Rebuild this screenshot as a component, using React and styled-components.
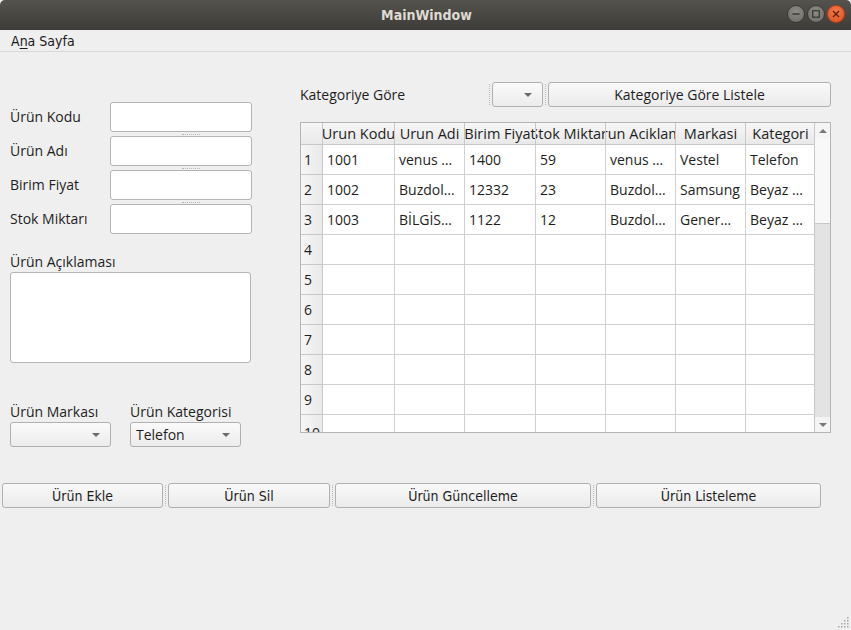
import styled, { createGlobalStyle } from "styled-components";

const Global = createGlobalStyle`
  html, body { margin: 0; padding: 0; background: #efefef; }
  body { font-family: "Open Sans", "DejaVu Sans", sans-serif; font-size: 14px; color: #1e1e1e; }
`;

const Window = styled.div`
  width: 851px;
  height: 630px;
  display: flex;
  flex-direction: column;
  background: #efefef;
  position: relative;
  overflow: hidden;
`;

const TitleBar = styled.div`
  height: 30px;
  flex: none;
  background: linear-gradient(#55534e, #3d3c38);
  display: flex;
  align-items: center;
  justify-content: center;
  position: relative;
  border-radius: 5px 5px 0 0;
`;

const Title = styled.span`
  font-family: "DejaVu Sans Condensed", "DejaVu Sans", sans-serif;
  font-stretch: condensed;
  font-weight: bold;
  font-size: 14px;
  color: #dfdbd2;
  margin-left: 2px;
`;

const WinButtons = styled.div`
  position: absolute;
  right: 6px;
  top: 5px;
  display: flex;
  gap: 2px;
`;

const WinBtn = styled.div`
  width: 18px;
  height: 18px;
  border-radius: 50%;
  background: ${(p) =>
    p.$close
      ? "radial-gradient(circle at 50% 35%, #f47a4b, #e0501c)"
      : "radial-gradient(circle at 50% 35%, #8e8c87, #6b6964)"};
  border: 1px solid ${(p) => (p.$close ? "#b7431a" : "#3a3935")};
  box-sizing: border-box;
  display: flex;
  align-items: center;
  justify-content: center;
`;

const MenuBar = styled.div`
  height: 21px;
  flex: none;
  border-bottom: 1px solid #d8d8d8;
  display: flex;
  align-items: center;
  padding-left: 11px;
  font-family: "DejaVu Sans Condensed", "DejaVu Sans", sans-serif;
  font-stretch: condensed;
  font-size: 14px;
  color: #1a1a1a;
  u { text-decoration-thickness: 1px; text-underline-offset: 2px; }
`;

const Body = styled.div`
  display: flex;
  padding-top: 30px;
  height: 381px;
  flex: none;
`;

const LeftCol = styled.div`
  width: 290px;
  flex: none;
  padding-left: 10px;
  padding-top: 20px;
  box-sizing: border-box;
  display: flex;
  flex-direction: column;
`;

const FormRows = styled.div`
  display: flex;
  flex-direction: column;
  gap: 4px;
`;

const FormRow = styled.div`
  display: flex;
  align-items: center;
  height: 30px;
  position: relative;
`;

const Label = styled.div`
  width: 100px;
  flex: none;
  white-space: nowrap;
  margin-top: -1px;
`;

const Input = styled.div`
  width: 142px;
  height: 30px;
  box-sizing: border-box;
  background: #fff;
  border: 1px solid #b4b4b4;
  border-radius: 3px;
`;

const HHandle = styled.div`
  position: absolute;
  left: 172px;
  bottom: -3px;
  width: 18px;
  border-top: 1px dotted #b8b8b8;
`;

const BlockLabel = styled.div`
  margin-top: 18px;
  height: 20px;
  line-height: 20px;
`;

const TextArea = styled.div`
  width: 241px;
  height: 91px;
  box-sizing: border-box;
  background: #fff;
  border: 1px solid #b4b4b4;
  border-radius: 3px;
`;

const ComboRow = styled.div`
  display: flex;
  gap: 19px;
  margin-top: 39px;
`;

const ComboField = styled.div`
  display: flex;
  flex-direction: column;
`;

const ComboLabel = styled.div`
  height: 20px;
  line-height: 20px;
`;

const Combo = styled.div`
  width: ${(p) => p.$w}px;
  height: 25px;
  box-sizing: border-box;
  border: 1px solid #b0b0b0;
  border-radius: 3px;
  background: linear-gradient(#fafafa, #ececec);
  display: flex;
  align-items: center;
  padding-left: 5px;
  padding-right: 10px;
  justify-content: space-between;
  flex: none;
`;

const Arrow = styled.span`
  width: 0;
  height: 0;
  border-left: 4px solid transparent;
  border-right: 4px solid transparent;
  border-top: 4px solid #6a6a6a;
  margin-left: auto;
`;

const RightCol = styled.div`
  width: 531px;
  flex: none;
  margin-left: 10px;
  display: flex;
  flex-direction: column;
`;

const TopRow = styled.div`
  display: flex;
  align-items: center;
  height: 25px;
`;

const TopLabel = styled.div`
  width: 187px;
  flex: none;
`;

const VHandle = styled.div`
  width: 0;
  height: 21px;
  border-left: 1px dotted #b8b8b8;
  margin: 0 2px;
  flex: none;
`;

const Button = styled.div`
  width: ${(p) => p.$w}px;
  height: 25px;
  box-sizing: border-box;
  border: 1px solid #b0b0b0;
  border-radius: 3px;
  background: linear-gradient(#f9f9f9, #ebebeb);
  display: flex;
  align-items: center;
  justify-content: center;
  flex: none;
  font-family: ${(p) =>
    p.$narrow ? `"DejaVu Sans Condensed", "DejaVu Sans", sans-serif` : "inherit"};
  font-stretch: ${(p) => (p.$narrow ? "condensed" : "normal")};
  white-space: nowrap;
`;

const Table = styled.div`
  margin-top: 15px;
  width: 531px;
  height: 311px;
  box-sizing: border-box;
  border: 1px solid #b4b4b4;
  display: flex;
  background: #fff;
`;

const TableView = styled.div`
  flex: 1;
  overflow: hidden;
  display: grid;
  grid-template-columns: 22px 72px 70px 71px 70px 70px 70px 70px;
  grid-auto-rows: 30px;
  grid-template-rows: 22px;
  align-content: start;
`;

const HeadCell = styled.div`
  background: linear-gradient(#f6f6f6, #e9e9e9);
  border-right: 1px solid #c8c8c8;
  border-bottom: 1px solid #c8c8c8;
  display: flex;
  justify-content: center;
  align-items: center;
  overflow: hidden;
  white-space: nowrap;
  box-sizing: border-box;
  font-size: 14.5px;
`;

const RowHead = styled.div`
  background: linear-gradient(90deg, #f6f6f6, #e9e9e9);
  border-right: 1px solid #c8c8c8;
  border-bottom: 1px solid #c8c8c8;
  display: flex;
  align-items: center;
  padding-left: 3px;
  box-sizing: border-box;
  overflow: hidden;
  padding-top: ${(p) => (p.$cut ? "6px" : "0")};
`;

const Cell = styled.div`
  border-right: 1px solid #d0d0d0;
  border-bottom: 1px solid #d0d0d0;
  display: flex;
  align-items: center;
  padding-left: 4px;
  box-sizing: border-box;
  overflow: hidden;
  white-space: nowrap;
`;

const ScrollBar = styled.div`
  width: 15px;
  flex: none;
  border-left: 1px solid #c8c8c8;
  display: flex;
  flex-direction: column;
  background: #e3e3e3;
`;

const ScrollArrow = styled.div`
  height: 15px;
  flex: none;
  background: #f4f4f4;
  display: flex;
  align-items: center;
  justify-content: center;
  span {
    width: 0;
    height: 0;
    border-left: 4px solid transparent;
    border-right: 4px solid transparent;
    ${(p) => (p.$up ? "border-bottom" : "border-top")}: 4px solid #777;
  }
`;

const Thumb = styled.div`
  height: 85px;
  flex: none;
  background: #f8f8f8;
  border-bottom: 1px solid #c8c8c8;
`;

const Track = styled.div`
  flex: 1;
`;

const ButtonRow = styled.div`
  display: flex;
  align-items: center;
  padding-left: 2px;
  margin-top: 20px;
`;

const Grip = styled.svg`
  position: absolute;
  right: 2px;
  bottom: 2px;
`;

const columns = [
  "Urun Kodu",
  "Urun Adi",
  "Birim Fiyat",
  "Stok Miktarı",
  "Urun Aciklama",
  "Markasi",
  "Kategori",
];

const rows = [
  ["1001", "venus …", "1400", "59", "venus …", "Vestel", "Telefon"],
  ["1002", "Buzdol…", "12332", "23", "Buzdol…", "Samsung", "Beyaz …"],
  ["1003", "BİLGİS…", "1122", "12", "Buzdol…", "Gener…", "Beyaz …"],
];

const fields = ["Ürün Kodu", "Ürün Adı", "Birim Fiyat", "Stok Miktarı"];

export default function App() {
  const allRows = [];
  for (let i = 0; i < 10; i++) {
    allRows.push(rows[i] || ["", "", "", "", "", "", ""]);
  }

  return (
    <>
      <Global />
      <Window>
        <TitleBar>
          <Title>MainWindow</Title>
          <WinButtons>
            <WinBtn>
              <svg width="8" height="8" viewBox="0 0 8 8">
                <line x1="0.5" y1="4" x2="7.5" y2="4" stroke="#3b3a36" strokeWidth="1.5" />
              </svg>
            </WinBtn>
            <WinBtn>
              <svg width="8" height="8" viewBox="0 0 8 8">
                <rect x="0.75" y="0.75" width="6.5" height="6.5" fill="none" stroke="#3b3a36" strokeWidth="1.3" />
              </svg>
            </WinBtn>
            <WinBtn $close>
              <svg width="8" height="8" viewBox="0 0 8 8">
                <path d="M1 1L7 7M7 1L1 7" stroke="#5a200a" strokeWidth="1.4" />
              </svg>
            </WinBtn>
          </WinButtons>
        </TitleBar>
        <MenuBar>
          A<u>n</u>a Sayfa
        </MenuBar>

        <Body>
          <LeftCol>
            <FormRows>
              {fields.map((f, i) => (
                <FormRow key={f}>
                  <Label>{f}</Label>
                  <Input />
                  {i < fields.length - 1 && <HHandle />}
                </FormRow>
              ))}
            </FormRows>
            <BlockLabel>Ürün Açıklaması</BlockLabel>
            <TextArea />
            <ComboRow>
              <ComboField>
                <ComboLabel>Ürün Markası</ComboLabel>
                <Combo $w={101}>
                  <Arrow />
                </Combo>
              </ComboField>
              <ComboField>
                <ComboLabel>Ürün Kategorisi</ComboLabel>
                <Combo $w={111}>
                  Telefon
                  <Arrow />
                </Combo>
              </ComboField>
            </ComboRow>
          </LeftCol>

          <RightCol>
            <TopRow>
              <TopLabel>Kategoriye Göre</TopLabel>
              <VHandle />
              <Combo $w={51}>
                <Arrow />
              </Combo>
              <VHandle />
              <Button $w={283}>Kategoriye Göre Listele</Button>
            </TopRow>
            <Table>
              <TableView>
                <HeadCell />
                {columns.map((c) => (
                  <HeadCell key={c}>{c}</HeadCell>
                ))}
                {allRows.map((r, i) => [
                  <RowHead key={"h" + i} $cut={i === 9}>
                    {i + 1}
                  </RowHead>,
                  ...r.map((v, j) => <Cell key={i + "-" + j}>{v}</Cell>),
                ])}
              </TableView>
              <ScrollBar>
                <ScrollArrow $up>
                  <span />
                </ScrollArrow>
                <Thumb />
                <Track />
                <ScrollArrow>
                  <span />
                </ScrollArrow>
              </ScrollBar>
            </Table>
          </RightCol>
        </Body>

        <ButtonRow>
          <Button $w={161} $narrow>Ürün Ekle</Button>
          <VHandle />
          <Button $w={162} $narrow>Ürün Sil</Button>
          <VHandle />
          <Button $w={256} $narrow>Ürün Güncelleme</Button>
          <VHandle />
          <Button $w={225} $narrow>Ürün Listeleme</Button>
        </ButtonRow>

        <Grip width="12" height="12" viewBox="0 0 12 12">
          {[
            [10, 1],
            [7, 4], [10, 4],
            [4, 7], [7, 7], [10, 7],
            [1, 10], [4, 10], [7, 10], [10, 10],
          ].map(([x, y]) => (
            <rect key={x + "_" + y} x={x} y={y} width="1.5" height="1.5" fill="#a8a8a8" />
          ))}
        </Grip>
      </Window>
    </>
  );
}
